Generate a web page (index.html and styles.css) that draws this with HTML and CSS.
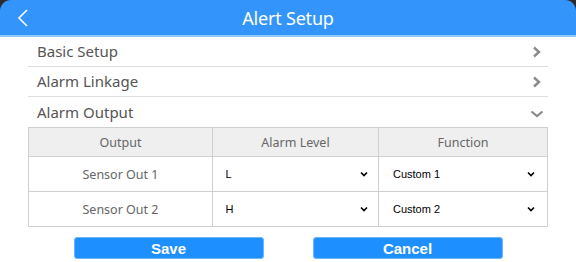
FILE: index.html
```
<!DOCTYPE html>
<html lang="en">
<head>
    <meta charset="UTF-8">
    <meta name="viewport" content="width=device-width, initial-scale=1.0">
    <title>Alert Setup</title>
    <link rel="stylesheet" href="styles.css">
</head>
<body>
    <div class="header">
        <svg class="back" width="12" height="18" viewBox="0 0 12 18">
            <path d="M10 1 L2 9 L10 17" fill="none" stroke="#fff" stroke-width="1.6"/>
        </svg>
        <div class="title">Alert Setup</div>
    </div>
    <div class="content">
        <div class="menu-row">
            <span>Basic Setup</span>
            <svg width="10" height="12" viewBox="0 0 10 12"><path d="M2 1.5 L7 6 L2 10.5" fill="none" stroke="#8a8a8a" stroke-width="2.4"/></svg>
        </div>
        <div class="menu-row">
            <span>Alarm Linkage</span>
            <svg width="10" height="12" viewBox="0 0 10 12"><path d="M2 1.5 L7 6 L2 10.5" fill="none" stroke="#8a8a8a" stroke-width="2.4"/></svg>
        </div>
        <div class="menu-row open">
            <span>Alarm Output</span>
            <svg width="14" height="10" viewBox="0 0 14 10"><path d="M1.5 2.5 L7 7 L12.5 2.5" fill="none" stroke="#8a8a8a" stroke-width="2.2"/></svg>
        </div>
        <table class="output-table">
            <tr>
                <th class="c1">Output</th>
                <th class="c2">Alarm Level</th>
                <th class="c3">Function</th>
            </tr>
            <tr>
                <td>Sensor Out 1</td>
                <td><select><option>L</option><option>H</option></select></td>
                <td><select><option>Custom 1</option><option>Custom 2</option></select></td>
            </tr>
            <tr>
                <td>Sensor Out 2</td>
                <td><select><option>H</option><option>L</option></select></td>
                <td><select><option>Custom 2</option><option>Custom 1</option></select></td>
            </tr>
        </table>
        <div class="buttons">
            <button>Save</button>
            <button>Cancel</button>
        </div>
    </div>
</body>
</html>
```

FILE: styles.css
```
body {
    margin: 0;
    background-color: #2b2b2b;
    font-family: 'Noto Sans', sans-serif;
}
.header {
    height: 35px;
    background-color: #3395fb;
    border-radius: 11px 11px 0 0;
    border-bottom: 2px solid #8fcaf7;
    display: flex;
    align-items: center;
    justify-content: center;
    position: relative;
}
.back {
    position: absolute;
    left: 17px;
    top: 9px;
}
.title {
    color: #fff;
    font-size: 18px;
    letter-spacing: -0.2px;
}
.content {
    background-color: #fff;
    padding: 0 28px 0 28px;
    height: 225px;
}
.menu-row {
    height: 29px;
    border-bottom: 1px solid #dedede;
    display: flex;
    align-items: center;
    justify-content: space-between;
    padding: 0 6px 0 9px;
    color: #555;
    font-size: 15px;
}
.menu-row span {
    margin-top: -1px;
}
.menu-row.open {
    border-bottom: none;
    height: 30px;
}
.menu-row.open svg {
    margin-right: -2px;
    margin-top: 4px;
}
.output-table {
    width: 520px;
    border-collapse: collapse;
    font-size: 12.5px;
    color: #666;
}
.output-table th {
    background-color: #efefef;
    font-weight: normal;
    height: 28px;
    padding: 0;
    border: 1.5px solid #cfcfcf;
}
.output-table td {
    height: 34px;
    padding: 0;
    border: 1.5px solid #cfcfcf;
    text-align: center;
}
.c1 { width: 183px; }
.c2 { width: 165px; }
select {
    appearance: none;
    -webkit-appearance: none;
    width: 152px;
    border: none;
    background-color: transparent;
    background-image: url("data:image/svg+xml;utf8,<svg xmlns='http://www.w3.org/2000/svg' width='8' height='6' viewBox='0 0 8 6'><path d='M1 1.5 L4 4.5 L7 1.5' fill='none' stroke='black' stroke-width='1.6'/></svg>");
    background-repeat: no-repeat;
    background-position: right 4px center;
    font-family: 'Liberation Sans', Arial, sans-serif;
    font-size: 11px;
    color: #000;
    padding: 4px 6px;
    outline: none;
}
.buttons {
    display: flex;
    justify-content: center;
    gap: 49px;
    padding-top: 10px;
}
button {
    width: 190px;
    height: 22px;
    background-color: #1e8fff;
    border: 1px solid #6cb6ff;
    border-radius: 3px;
    color: #fff;
    font-family: 'Liberation Sans', Arial, sans-serif;
    font-weight: bold;
    font-size: 15px;
    padding: 0;
}
```
